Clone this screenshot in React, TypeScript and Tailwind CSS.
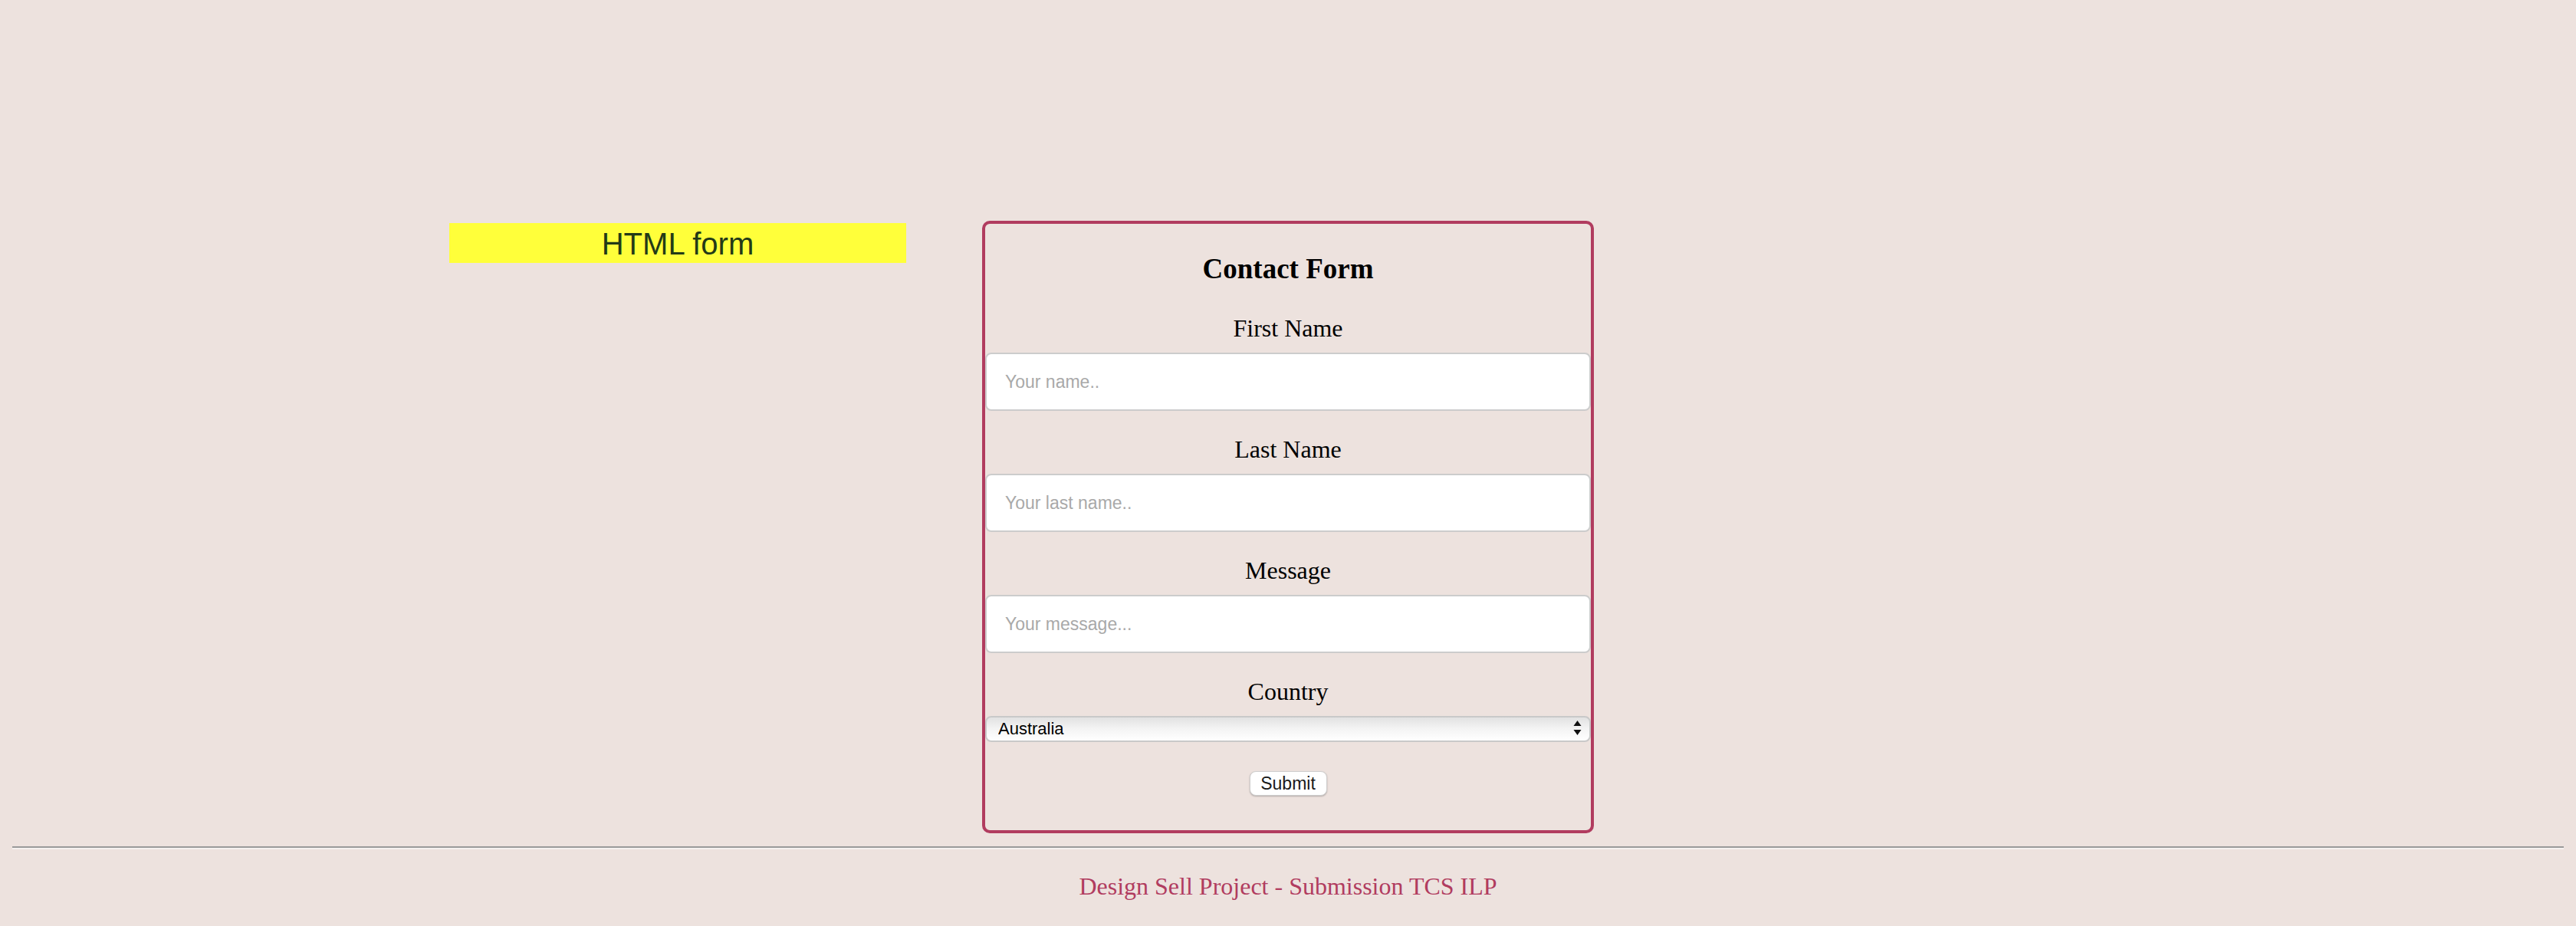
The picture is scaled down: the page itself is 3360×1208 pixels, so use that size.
import React from "react";

export default function App() {
  const labelCls =
    "block text-center text-[32px] leading-[37px] text-black";
  const inputCls =
    "block w-full h-[76px] bg-white border-2 border-[#cccccc] rounded-[8px] pl-[24px] text-[23px] font-['Liberation_Sans',Arial,sans-serif] text-black placeholder:text-[#a9a9a9] outline-none";
  return (
    <div className="min-h-[1208px] w-full bg-[#ede2de] font-['Liberation_Serif','Times_New_Roman',serif]">
      <div className="grid grid-cols-[1fr_798px_1fr] pt-[288px]">
        <div className="flex justify-end items-start pr-[99px] pt-[3px]">
          <div className="w-[596px] h-[52px] bg-[#ffff3a] text-center text-[40px] leading-[55px] text-[#233a17] font-['Liberation_Sans',Arial,sans-serif]">
            HTML form
          </div>
        </div>
        <form
          className="border-4 border-[#b13c5f] rounded-[10px] pb-[45px]"
          onSubmit={(e) => e.preventDefault()}
        >
          <h3 className="mt-[37px] text-center text-[37px] leading-[43px] font-bold text-black">
            Contact Form
          </h3>
          <label className={`${labelCls} mt-[38px]`}>First Name</label>
          <input className={`${inputCls} mt-[13px]`} placeholder="Your name.." />
          <label className={`${labelCls} mt-[32px]`}>Last Name</label>
          <input
            className={`${inputCls} mt-[13px]`}
            placeholder="Your last name.."
          />
          <label className={`${labelCls} mt-[32px]`}>Message</label>
          <input
            className={`${inputCls} mt-[13px]`}
            placeholder="Your message..."
          />
          <label className={`${labelCls} mt-[32px]`}>Country</label>
          <div className="relative mt-[13px] h-[34px]">
            <select
              className="block w-full h-[34px] appearance-none border-2 border-[#c9c9c9] rounded-[8px] bg-gradient-to-b from-[#e2e2e2] via-[#f4f4f4] to-white pl-[15px] text-[22px] leading-[30px] text-black font-['Liberation_Sans',Arial,sans-serif] outline-none"
              defaultValue="Australia"
            >
              <option>Australia</option>
              <option>Canada</option>
              <option>USA</option>
            </select>
            <svg
              className="pointer-events-none absolute right-[12px] top-[6px]"
              width="11"
              height="20"
              viewBox="0 0 11 20"
            >
              <polygon points="5.5,0 10.5,7 0.5,7" fill="#111" />
              <polygon points="0.5,12 10.5,12 5.5,19" fill="#111" />
            </svg>
          </div>
          <div className="flex justify-center mt-[38px]">
            <button
              type="submit"
              className="w-[101px] h-[32px] bg-white border border-[#cfcfcf] rounded-[8px] shadow-[0_1px_2px_rgba(0,0,0,0.25)] text-[23px] leading-[28px] text-[#1a1a1a] font-['Liberation_Sans',Arial,sans-serif]"
            >
              Submit
            </button>
          </div>
        </form>
        <div />
      </div>
      <div className="mx-[16px] mt-[17px] border-t-2 border-b-2 border-t-[#9a9a9a] border-b-[#f6f1ef]" />
      <p className="mt-[30px] text-center text-[32px] leading-[37px] text-[#b13c5f]">
        Design Sell Project - Submission TCS ILP
      </p>
    </div>
  );
}
